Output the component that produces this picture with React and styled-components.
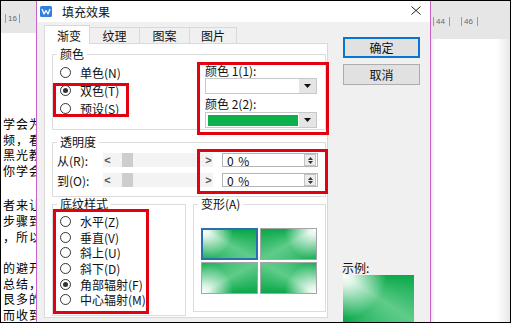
import React from "react";
import styled, { createGlobalStyle, css } from "styled-components";

const Global = createGlobalStyle`
  html, body { margin: 0; padding: 0; background: #fff; }
  body { font-family: "Noto Sans CJK SC", "Noto Sans", sans-serif; color: #000; }
  * { box-sizing: border-box; }
`;

const FONT = `"Noto Sans CJK SC", "Noto Sans", sans-serif`;
const GREEN = "#0aa84a";

const cornerBg = (corner, diag = 29) => {
  const map = {
    tl: { at: "0% 0%", s: 90, d: 90 + diag, e: 180 },
    tr: { at: "100% 0%", s: 180, d: 270 - diag, e: 270 },
    bl: { at: "0% 100%", s: 0, d: 90 - diag, e: 90 },
    br: { at: "100% 100%", s: 270, d: 270 + diag, e: 360 },
  };
  const m = map[corner];
  return `radial-gradient(circle at ${m.at}, rgba(255,255,255,1) 0%, rgba(255,255,255,0.85) 12%, rgba(255,255,255,0) 50%), conic-gradient(from 0deg at ${m.at}, ${GREEN} 0deg ${m.s}deg, #5fcc8a ${m.d}deg, ${GREEN} ${m.e}deg 360deg)`;
};

/* ---------- frame & document ---------- */
const Frame = styled.div`
  position: relative;
  width: 511px;
  height: 323px;
  border: 1px solid #000;
  display: flex;
  overflow: hidden;
  background: #fff;
`;

const LeftDoc = styled.div`
  width: 35px;
  flex: none;
  display: flex;
  flex-direction: column;
  overflow: hidden;
`;

const RightDoc = styled.div`
  width: 79px;
  flex: none;
  display: flex;
  flex-direction: column;
  overflow: hidden;
`;

const Ruler = styled.div`
  height: ${(p) => p.$h}px;
  flex: none;
  background: #e6e6e6;
  display: flex;
  align-items: center;
  padding-left: ${(p) => p.$pl}px;
  gap: ${(p) => p.$gap || 0}px;
  padding-top: 2px;
`;

const Tick = styled.span`
  font-family: "Liberation Sans", sans-serif;
  font-size: 8px;
  line-height: 9px;
  color: #6a6a6a;
  border-left: 1px solid #9a9a9a;
  border-right: ${(p) => (p.$open ? "none" : "1px solid #9a9a9a")};
  padding: 0 2px;
  min-width: ${(p) => p.$w || 0}px;
`;

const DocText = styled.div`
  flex: 1;
  padding-top: 83px;
  font-family: ${FONT};
  font-size: 12px;
  letter-spacing: 1px;
  white-space: nowrap;
`;

const Para = styled.div`
  margin-top: ${(p) => p.$mt || 0}px;
`;

const Line = styled.div`
  height: 15.6px;
  line-height: 15.6px;
  margin-left: ${(p) => p.$shift ?? 2}px;
`;

const Page = styled.div`
  flex: 1;
  background: linear-gradient(to right, #ececec 0px, #fff 4px, #fff 66px, #e9e9e9 78px);
`;

/* ---------- dialog ---------- */
const Dialog = styled.div`
  width: 395px;
  flex: none;
  border-left: 1px solid #c862c8;
  border-right: 1px solid #c862c8;
  background: #f0f0f0;
  display: flex;
  flex-direction: column;
  font-family: ${FONT};
  font-size: 12px;
`;

const TitleBar = styled.div`
  height: 21px;
  flex: none;
  background: #fff;
  display: flex;
  align-items: center;
  padding-left: 3px;
  padding-right: 9px;
`;

const Title = styled.span`
  margin-left: 10px;
  font-size: 12px;
  line-height: 14px;
  color: #111;
`;

const CloseBtn = styled.span`
  margin-left: auto;
  display: flex;
  margin-top: -2px;
`;

const Body = styled.div`
  flex: 1;
  display: flex;
  padding: 3px 9px 0 7px;
  gap: 15px;
`;

const MainCol = styled.div`
  width: 284px;
  flex: none;
  display: flex;
  flex-direction: column;
`;

const TabRow = styled.div`
  height: 18px;
  display: flex;
  align-items: flex-end;
`;

const Tab = styled.div`
  width: ${(p) => p.$w}px;
  height: 16px;
  margin-left: -1px;
  display: flex;
  align-items: center;
  justify-content: center;
  border: 1px solid #d9d9d9;
  border-bottom: none;
  background: #f0f0f0;
  font-size: 12px;
  color: #111;
  &:first-child { margin-left: 0; }
  ${(p) =>
    p.$active &&
    css`
      height: 19px;
      margin-bottom: -1px;
      background: #fff;
      position: relative;
      z-index: 1;
      padding-left: 4px;
    `}
`;

const Panel = styled.div`
  height: 275px;
  background: #fff;
  border: 1px solid #d9d9d9;
  padding: 3px 1px 0 7px;
  display: flex;
  flex-direction: column;
`;

const Group = styled.fieldset`
  margin: ${(p) => p.$mt || 0}px 0 0 0;
  min-width: 0;
  padding: 0;
  border: 1px solid #dcdcdc;
  width: ${(p) => (p.$w ? `${p.$w}px` : "auto")};
  flex: none;
`;

const Legend = styled.legend`
  margin-left: 4px;
  padding: 0 3px;
  font-size: 12px;
  line-height: 14px;
  color: #111;
`;

const ColorGrid = styled.div`
  display: grid;
  grid-template-columns: 145px 112px;
  padding: 2px 7px 1px;
`;

const Stack = styled.div`
  display: flex;
  flex-direction: column;
  padding: ${(p) => p.$pad || 0};
`;

const RadioRow = styled.div`
  height: ${(p) => p.$h}px;
  display: flex;
  align-items: center;
  gap: 9px;
  font-size: 12px;
  color: #111;
  white-space: nowrap;
`;

const RadioCircle = styled.span`
  width: 11px;
  height: 11px;
  flex: none;
  border-radius: 50%;
  border: 1px solid #333;
  background: #fff;
  display: flex;
  align-items: center;
  justify-content: center;
  ${(p) =>
    p.$checked &&
    css`
      &::after {
        content: "";
        width: 5px;
        height: 5px;
        border-radius: 50%;
        background: #333;
      }
    `}
`;

const FieldLabel = styled.div`
  height: ${(p) => p.$h}px;
  display: flex;
  align-items: center;
  font-size: 12px;
  color: #111;
  white-space: nowrap;
`;

const Combo = styled.div`
  height: 16px;
  display: flex;
  border: 1px solid #c8c8c8;
  background: #fff;
`;

const ComboValue = styled.div`
  flex: 1;
  margin: 2px 1px 1px 2px;
  background: ${(p) => p.$color || "#fff"};
`;

const ComboBtn = styled.div`
  width: 17px;
  flex: none;
  background: #e5e5e5;
  display: flex;
  align-items: center;
  justify-content: center;
`;

const TransGrid = styled.div`
  display: grid;
  grid-template-columns: 46px 119px 96px;
  row-gap: 6px;
  grid-auto-rows: 14px;
  padding: 4px 0 9px 4px;
  align-items: center;
`;

const Slider = styled.div`
  width: 110px;
  height: 14px;
  display: flex;
  align-items: center;
  background: #f3f3f3;
`;

const SlideArrow = styled.span`
  width: 9px;
  flex: none;
  font-family: "Liberation Sans", sans-serif;
  font-size: 11px;
  font-weight: bold;
  line-height: 14px;
  color: #555;
  text-align: center;
`;

const Thumb = styled.span`
  width: 11px;
  height: 14px;
  margin-left: 10px;
  background: #cdcdcd;
`;

const Spin = styled.div`
  height: 14px;
  display: flex;
  align-items: center;
  border: 1px solid #b5b5b5;
  background: #fff;
  padding-left: 4px;
  font-size: 12px;
  color: #111;
`;

const SpinText = styled.span`
  flex: 1;
  letter-spacing: 1px;
`;

const SpinBtn = styled.span`
  width: 12px;
  height: 12px;
  margin-right: 1px;
  border: 1px solid #c4c4c4;
  background: #ececec;
  display: flex;
  flex-direction: column;
  align-items: center;
  justify-content: center;
  gap: 1px;
`;

const BottomRow = styled.div`
  display: flex;
  gap: 7px;
  align-items: flex-start;
`;

const TileGrid = styled.div`
  display: grid;
  grid-template-columns: 57px 57px;
  grid-template-rows: 32px 32px;
  gap: 2px;
  padding: 17px 0 17px 7px;
`;

const Tile = styled.div`
  border: ${(p) => (p.$selected ? "2px solid #2a6fb0" : "1px solid #a5a5a5")};
  background: ${(p) => cornerBg(p.$corner)};
`;

const SideCol = styled.div`
  width: 77px;
  flex: none;
  display: flex;
  flex-direction: column;
  padding-top: 12px;
`;

const Button = styled.div`
  height: 21px;
  margin-top: ${(p) => p.$mt || 0}px;
  display: flex;
  align-items: center;
  justify-content: center;
  background: #e1e1e1;
  border: ${(p) => (p.$primary ? "2px solid #0a74d0" : "1px solid #adadad")};
  font-size: 12px;
  color: #111;
`;

const SampleLabel = styled.div`
  margin-top: 176px;
  margin-left: -1px;
  height: 14px;
  line-height: 14px;
  font-size: 12px;
  color: #111;
`;

const Sample = styled.div`
  width: 71px;
  height: 50px;
  flex: none;
  background: ${cornerBg("tl", 33)};
`;

const RedBox = styled.div`
  position: absolute;
  left: ${(p) => p.$x}px;
  top: ${(p) => p.$y}px;
  width: ${(p) => p.$w}px;
  height: ${(p) => p.$h}px;
  border: 3px solid #e3000f;
  pointer-events: none;
`;

/* ---------- icons ---------- */
const WpsIcon = () => (
  <svg width="12" height="11" viewBox="0 0 12 11">
    <rect x="0" y="0" width="12" height="11" rx="1.5" fill="#2f80e0" />
    <path d="M2 3 L4 8 L6 4.5 L8 8 L10 3" stroke="#fff" strokeWidth="1.3" fill="none" strokeLinejoin="round" />
  </svg>
);

const CloseIcon = () => (
  <svg width="10" height="9" viewBox="0 0 10 9">
    <path d="M0.5 0.5 L9.5 8.5 M9.5 0.5 L0.5 8.5" stroke="#222" strokeWidth="1" />
  </svg>
);

const DownTri = () => (
  <svg width="7" height="4" viewBox="0 0 7 4">
    <path d="M0 0 L7 0 L3.5 4 Z" fill="#111" />
  </svg>
);

const UpSmall = () => (
  <svg width="5" height="3" viewBox="0 0 5 3">
    <path d="M0 3 L5 3 L2.5 0 Z" fill="#333" />
  </svg>
);
const DownSmall = () => (
  <svg width="5" height="3" viewBox="0 0 5 3">
    <path d="M0 0 L5 0 L2.5 3 Z" fill="#333" />
  </svg>
);

const Radio = ({ label, checked, h }) => (
  <RadioRow $h={h}>
    <RadioCircle $checked={checked} />
    <span>{label}</span>
  </RadioRow>
);

const SliderRow = ({ label }) => (
  <>
    <FieldLabel $h={14}>{label}</FieldLabel>
    <Slider>
      <SlideArrow>&lt;</SlideArrow>
      <Thumb />
      <span style={{ flex: 1 }} />
      <SlideArrow>&gt;</SlideArrow>
    </Slider>
    <Spin>
      <SpinText>0 %</SpinText>
      <SpinBtn>
        <UpSmall />
        <DownSmall />
      </SpinBtn>
    </Spin>
  </>
);

const leftLines1 = ["学会为", "频，看", "黑光教", "你学会"];
const leftLines2 = ["者来让", "步骤到", "，所以"];
const leftLines3 = ["的避开", "总结，", "艮多的", "而收到"];

export default function App() {
  return (
    <>
      <Global />
      <Frame>
        <LeftDoc>
          <Ruler $h={32} $pl={4}>
            <Tick>16</Tick>
          </Ruler>
          <DocText>
            <Para>
              {leftLines1.map((t) => (
                <Line key={t}>{t}</Line>
              ))}
            </Para>
            <Para $mt={19}>
              {leftLines2.map((t) => (
                <Line key={t}>{t}</Line>
              ))}
            </Para>
            <Para $mt={16}>
              {leftLines3.map((t) => (
                <Line key={t}>{t}</Line>
              ))}
            </Para>
          </DocText>
        </LeftDoc>

        <Dialog>
          <TitleBar>
            <WpsIcon />
            <Title>填充效果</Title>
            <CloseBtn>
              <CloseIcon />
            </CloseBtn>
          </TitleBar>
          <Body>
            <MainCol>
              <TabRow>
                <Tab $w={46} $active>渐变</Tab>
                <Tab $w={51}>纹理</Tab>
                <Tab $w={51}>图案</Tab>
                <Tab $w={48}>图片</Tab>
              </TabRow>
              <Panel>
                <Group>
                  <Legend>颜色</Legend>
                  <ColorGrid>
                    <Stack>
                      <Radio h={18} label="单色(N)" />
                      <Radio h={18} label="双色(T)" checked />
                      <Radio h={18} label="预设(S)" />
                    </Stack>
                    <Stack>
                      <FieldLabel $h={15}>颜色 1(1):</FieldLabel>
                      <Combo>
                        <ComboValue />
                        <ComboBtn>
                          <DownTri />
                        </ComboBtn>
                      </Combo>
                      <FieldLabel $h={18}>颜色 2(2):</FieldLabel>
                      <Combo>
                        <ComboValue $color="#0db14b" />
                        <ComboBtn>
                          <DownTri />
                        </ComboBtn>
                      </Combo>
                    </Stack>
                  </ColorGrid>
                </Group>

                <Group $mt={5}>
                  <Legend>透明度</Legend>
                  <TransGrid>
                    <SliderRow label="从(R):" />
                    <SliderRow label="到(O):" />
                  </TransGrid>
                </Group>

                <BottomRow>
                  <Group $w={134}>
                    <Legend>底纹样式</Legend>
                    <Stack $pad="3px 0 7px 7px">
                      <Radio h={15.6} label="水平(Z)" />
                      <Radio h={15.6} label="垂直(V)" />
                      <Radio h={15.6} label="斜上(U)" />
                      <Radio h={15.6} label="斜下(D)" />
                      <Radio h={15.6} label="角部辐射(F)" checked />
                      <Radio h={15.6} label="中心辐射(M)" />
                    </Stack>
                  </Group>
                  <Group $w={133}>
                    <Legend>变形(A)</Legend>
                    <TileGrid>
                      <Tile $corner="tl" $selected />
                      <Tile $corner="tr" />
                      <Tile $corner="bl" />
                      <Tile $corner="br" />
                    </TileGrid>
                  </Group>
                </BottomRow>
              </Panel>
            </MainCol>

            <SideCol>
              <Button $primary>确定</Button>
              <Button $mt={6}>取消</Button>
              <SampleLabel>示例:</SampleLabel>
              <Sample />
            </SideCol>
          </Body>
        </Dialog>

        <RightDoc>
          <Ruler $h={38} $pl={2} $gap={11}>
            <Tick $w={17}>44</Tick>
            <Tick $w={17}>46</Tick>
            <Tick $open />
          </Ruler>
          <Page />
        </RightDoc>

        <RedBox $x={52} $y={82} $w={76} $h={34} />
        <RedBox $x={196} $y={61} $w={132} $h={73} />
        <RedBox $x={196} $y={148} $w={131} $h={45} />
        <RedBox $x={52} $y={208} $w={96} $h={105} />
      </Frame>
    </>
  );
}
